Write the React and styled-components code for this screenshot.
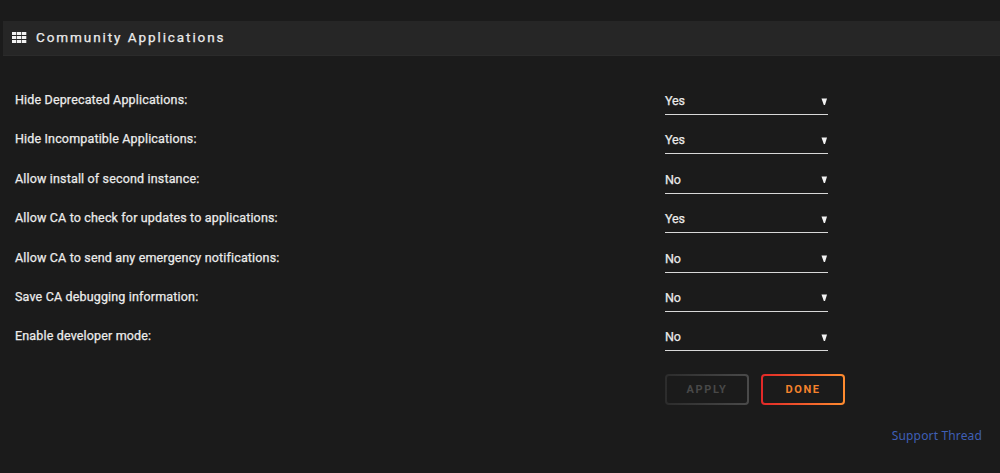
import React, { useState } from "react";
import styled, { createGlobalStyle } from "styled-components";

const settings = [
  { label: "Hide Deprecated Applications:", value: "Yes" },
  { label: "Hide Incompatible Applications:", value: "Yes" },
  { label: "Allow install of second instance:", value: "No" },
  { label: "Allow CA to check for updates to applications:", value: "Yes" },
  { label: "Allow CA to send any emergency notifications:", value: "No" },
  { label: "Save CA debugging information:", value: "No" },
  { label: "Enable developer mode:", value: "No" },
];

const App = () => {
  const [values, setValues] = useState(settings.map((s) => s.value));

  const toggle = (index) => {
    setValues(values.map((v, i) => (i === index ? (v === "Yes" ? "No" : "Yes") : v)));
  };

  return (
    <Page>
      <GlobalStyle />
      <TitleBar>
        <GridIcon viewBox="0 0 15 11">
          {[0, 4, 8].map((y) =>
            [0, 5, 10].map((x) => <rect key={`${x}-${y}`} x={x} y={y} width="4.3" height="3" />)
          )}
        </GridIcon>
        <Title>Community Applications</Title>
      </TitleBar>

      <Form>
        {settings.map((setting, i) => (
          <Row key={setting.label}>
            <Label>{setting.label}</Label>
            <Select type="button" onClick={() => toggle(i)}>
              <span>{values[i]}</span>
              <Arrow viewBox="0 0 6 7">
                <path d="M0.5 0.5H6L4 7H2.8z" />
              </Arrow>
            </Select>
          </Row>
        ))}
      </Form>

      <Actions>
        <Button disabled>Apply</Button>
        <Button $active>Done</Button>
      </Actions>

      <Footer>
        <SupportLink href="#">Support Thread</SupportLink>
      </Footer>
    </Page>
  );
};

// Styled Components
const GlobalStyle = createGlobalStyle`
  * {
    box-sizing: border-box;
  }
  body {
    margin: 0;
    background: #1b1b1b;
  }
`;

const Page = styled.div`
  height: 473px;
  padding-top: 21px;
  overflow: hidden;
  background: #1b1b1b;
  color: #ebebeb;
  font-family: Roboto, "Noto Sans", sans-serif;
  font-size: 12.5px;
  font-weight: 400;
  letter-spacing: 0.16px;
`;

const TitleBar = styled.header`
  display: flex;
  align-items: center;
  height: 35px;
  margin-left: 3px;
  padding: 0 0 2px 9px;
  background: #262626;
  border-bottom: 1px solid #2b2b2b;
`;

const GridIcon = styled.svg`
  width: 15px;
  height: 11px;
  fill: #f2f2f2;
`;

const Title = styled.h1`
  margin: 0 0 0 9px;
  font-size: 13.5px;
  line-height: 16px;
  font-weight: 400;
  letter-spacing: 1.92px;
  -webkit-text-stroke: 0.25px;
`;

const Form = styled.div`
  padding: 29px 0 0 15px;
`;

const Row = styled.div`
  display: grid;
  grid-template-columns: 650px 163px;
  height: 39.4px;
`;

const Label = styled.span`
  padding-top: 6px;
  line-height: 18px;
  -webkit-text-stroke: 0.25px;
`;

const Select = styled.button`
  display: flex;
  align-items: center;
  justify-content: space-between;
  height: 30px;
  padding: 2px 1px 0 0;
  border: none;
  border-bottom: 1px solid #d8d8d8;
  background: transparent;
  color: #ebebeb;
  font: inherit;
  letter-spacing: -0.1px;
  -webkit-text-stroke: 0.25px;
`;

const Arrow = styled.svg`
  width: 6px;
  height: 7px;
  margin-top: 1px;
  fill: #f2f2f2;
`;

const Actions = styled.div`
  display: flex;
  gap: 12px;
  padding: 13px 0 0 665px;
`;

const Button = styled.button`
  width: 84px;
  height: 31px;
  padding: 0;
  border: 2px solid transparent;
  border-radius: 4px;
  background: linear-gradient(#1b1b1b, #1b1b1b) padding-box,
    ${(props) =>
      props.$active
        ? "linear-gradient(90deg, #e22828, #ff8c2f)"
        : "linear-gradient(90deg, #2c2c2c, #4a4a4a)"} border-box;
  color: ${(props) => (props.$active ? "#f5822c" : "#484848")};
  font: 700 11px Roboto, sans-serif;
  letter-spacing: 1.6px;
  text-transform: uppercase;
`;

const Footer = styled.footer`
  display: flex;
  justify-content: flex-end;
  padding: 23px 18px 0 0;
`;

const SupportLink = styled.a`
  color: #3f5fb5;
  font-family: "Noto Sans", sans-serif;
  font-size: 12px;
  line-height: 16px;
  letter-spacing: 0.15px;
  text-decoration: none;
`;

export default App;
